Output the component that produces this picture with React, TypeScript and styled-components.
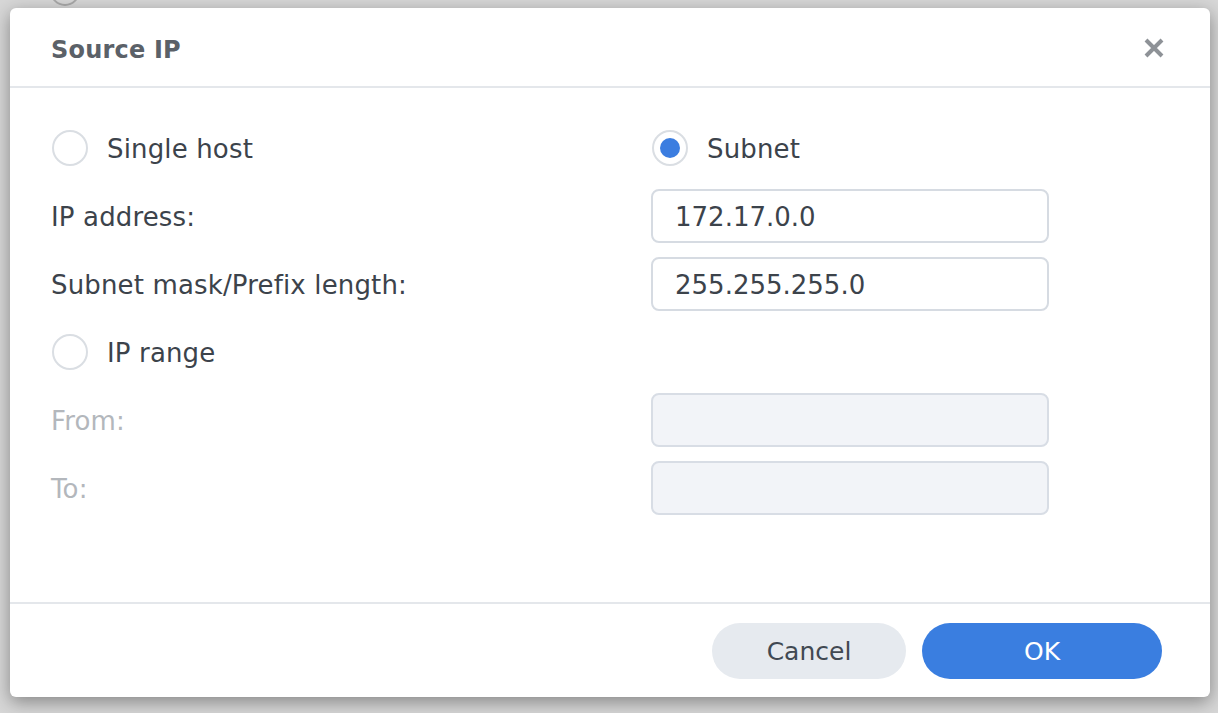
import React from "react";
import styled, { createGlobalStyle } from "styled-components";

const Global = createGlobalStyle`
  html, body { margin: 0; padding: 0; }
  body {
    background: #d7d7d7;
    font-family: "DejaVu Sans", Verdana, sans-serif;
    overflow: hidden;
  }
`;

const Page = styled.div`
  position: relative;
  width: 1218px;
  height: 713px;
  padding: 8px 0 0 10px;
  box-sizing: border-box;
`;

const GhostRadio = styled.div`
  position: absolute;
  left: 50px;
  top: -24px;
  width: 26px;
  height: 26px;
  border: 2px solid #a9a9a9;
  border-radius: 50%;
`;

const Dialog = styled.div`
  position: relative;
  width: 1200px;
  height: 689px;
  background: #fff;
  border-radius: 6px;
  box-shadow: 0 5px 18px rgba(0, 0, 0, 0.38);
  display: flex;
  flex-direction: column;
`;

const Header = styled.div`
  height: 78px;
  flex: none;
  display: flex;
  align-items: center;
  justify-content: space-between;
  padding: 0 44px 0 41px;
  border-bottom: 2px solid #e4e7eb;
`;

const Title = styled.div`
  font-size: 24px;
  font-weight: bold;
  letter-spacing: 0.2px;
  color: #5b6168;
  padding-top: 5px;
`;

const Close = styled.button`
  border: 0;
  background: none;
  padding: 0;
  margin-top: 2px;
  width: 24px;
  height: 24px;
  display: flex;
  align-items: center;
  justify-content: center;
  cursor: pointer;
`;

const Body = styled.div`
  flex: 1;
  padding: 33px 0 0 41px;
  display: grid;
  grid-template-columns: 600px 398px;
  grid-auto-rows: 54px;
  row-gap: 14px;
  align-content: start;
`;

const Cell = styled.div`
  display: flex;
  align-items: center;
`;

const Label = styled.div<{ $disabled?: boolean }>`
  font-size: 26px;
  letter-spacing: 0.15px;
  color: ${(p) => (p.$disabled ? "#b3b7bc" : "#3c434b")};
  line-height: 1;
  padding-top: 2px;
`;

const RadioWrap = styled.label`
  display: flex;
  align-items: center;
  gap: 19px;
  margin-left: 1px;
  cursor: pointer;
`;

const RadioCircle = styled.span<{ $checked?: boolean }>`
  width: 36px;
  height: 36px;
  box-sizing: border-box;
  border-radius: 50%;
  border: 2px solid #dadee3;
  background: #fff;
  display: flex;
  align-items: center;
  justify-content: center;
  &::after {
    content: "";
    display: ${(p) => (p.$checked ? "block" : "none")};
    width: 20px;
    height: 20px;
    border-radius: 50%;
    background: #3b7de0;
  }
`;

const Input = styled.div<{ $disabled?: boolean }>`
  width: 398px;
  height: 54px;
  box-sizing: border-box;
  border: 2px solid ${(p) => (p.$disabled ? "#d8dde5" : "#d6dbe2")};
  border-radius: 8px;
  background: ${(p) => (p.$disabled ? "#f2f4f8" : "#fff")};
  padding: 2px 22px 0;
  display: flex;
  align-items: center;
  font-size: 26px;
  color: #3c434b;
`;

const Footer = styled.div`
  flex: none;
  border-top: 2px solid #e4e7eb;
  padding: 19px 48px 18px 0;
  display: flex;
  justify-content: flex-end;
  gap: 16px;
`;

const Button = styled.button<{ $primary?: boolean; $w: number }>`
  width: ${(p) => p.$w}px;
  height: 56px;
  border: 0;
  border-radius: 28px;
  font-family: "DejaVu Sans", Verdana, sans-serif;
  font-size: 25px;
  background: ${(p) => (p.$primary ? "#3a7ee0" : "#e6eaef")};
  color: ${(p) => (p.$primary ? "#ffffff" : "#414952")};
  cursor: pointer;
  padding: 0;
`;

const Radio = ({ label, checked }: { label: string; checked?: boolean }) => (
  <RadioWrap>
    <RadioCircle $checked={checked} />
    <Label>{label}</Label>
  </RadioWrap>
);

export default function App() {
  return (
    <>
      <Global />
      <Page>
        <GhostRadio />
        <Dialog>
          <Header>
            <Title>Source IP</Title>
            <Close aria-label="Close">
              <svg width="22" height="22" viewBox="0 0 22 22">
                <path
                  d="M3 3 L19 19 M19 3 L3 19"
                  stroke="#8e9297"
                  strokeWidth="4"
                  strokeLinecap="butt"
                />
              </svg>
            </Close>
          </Header>
          <Body>
            <Cell>
              <Radio label="Single host" />
            </Cell>
            <Cell>
              <Radio label="Subnet" checked />
            </Cell>
            <Cell>
              <Label>IP address:</Label>
            </Cell>
            <Cell>
              <Input>172.17.0.0</Input>
            </Cell>
            <Cell>
              <Label>Subnet mask/Prefix length:</Label>
            </Cell>
            <Cell>
              <Input>255.255.255.0</Input>
            </Cell>
            <Cell>
              <Radio label="IP range" />
            </Cell>
            <Cell />
            <Cell>
              <Label $disabled>From:</Label>
            </Cell>
            <Cell>
              <Input $disabled />
            </Cell>
            <Cell>
              <Label $disabled>To:</Label>
            </Cell>
            <Cell>
              <Input $disabled />
            </Cell>
          </Body>
          <Footer>
            <Button $w={194}>Cancel</Button>
            <Button $w={240} $primary>
              OK
            </Button>
          </Footer>
        </Dialog>
      </Page>
    </>
  );
}
